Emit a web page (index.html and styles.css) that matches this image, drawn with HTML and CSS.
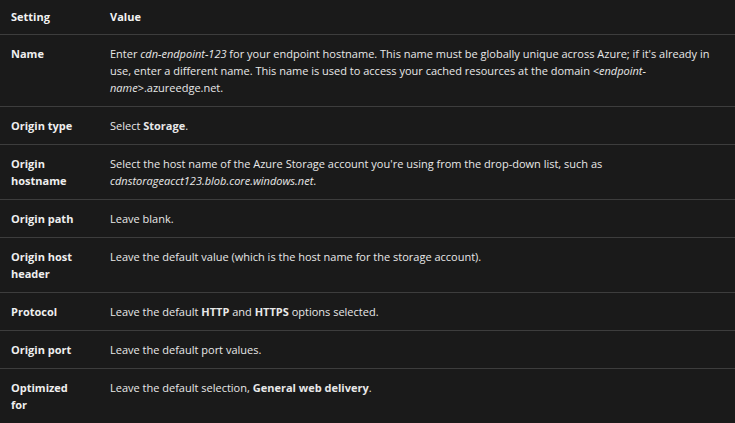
FILE: index.html
```html
<!DOCTYPE html>
<html lang="en">
<head>
<meta charset="utf-8">
<title>CDN endpoint settings</title>
<link rel="stylesheet" href="styles.css">
</head>
<body>
<table class="settings">
  <thead>
    <tr><th class="col-setting">Setting</th><th>Value</th></tr>
  </thead>
  <tbody>
    <tr><td class="name">Name</td><td>Enter <em>cdn-endpoint-123</em> for your endpoint hostname. This name must be globally unique across Azure; if it's already in use, enter a different name. This name is used to access your cached resources at the domain <em>&lt;endpoint-name&gt;</em>.azureedge.net.</td></tr>
    <tr><td class="name">Origin type</td><td>Select <strong>Storage</strong>.</td></tr>
    <tr><td class="name">Origin hostname</td><td>Select the host name of the Azure Storage account you're using from the drop-down list, such as <em>cdnstorageacct123.blob.core.windows.net</em>.</td></tr>
    <tr><td class="name">Origin path</td><td>Leave blank.</td></tr>
    <tr><td class="name">Origin host header</td><td>Leave the default value (which is the host name for the storage account).</td></tr>
    <tr><td class="name">Protocol</td><td>Leave the default <strong>HTTP</strong> and <strong>HTTPS</strong> options selected.</td></tr>
    <tr><td class="name">Origin port</td><td>Leave the default port values.</td></tr>
    <tr><td class="name">Optimized for</td><td>Leave the default selection, <strong>General web delivery</strong>.</td></tr>
  </tbody>
</table>
</body>
</html>
```
FILE: styles.css
```css
html, body {
  margin: 0;
  padding: 0;
  background: #1a1a1a;
}
body {
  font-family: "Segoe UI", "Open Sans", "Noto Sans", sans-serif;
  font-size: 11px;
  line-height: 17px;
  color: #e8e8e8;
}
.settings {
  width: 100%;
  border-collapse: collapse;
}
.settings th,
.settings td {
  text-align: left;
  vertical-align: top;
  padding: 10px 11px;
  border-bottom: 1px solid #3d3d3d;
}
.settings th {
  padding-top: 8px;
  padding-bottom: 9px;
  font-weight: 700;
  color: #f2f2f2;
}
.settings .col-setting,
.settings td.name {
  width: 66px;
  padding-right: 22px;
}
.settings td.name {
  font-weight: 700;
  color: #efefef;
}
.settings strong {
  font-weight: 700;
}
```
